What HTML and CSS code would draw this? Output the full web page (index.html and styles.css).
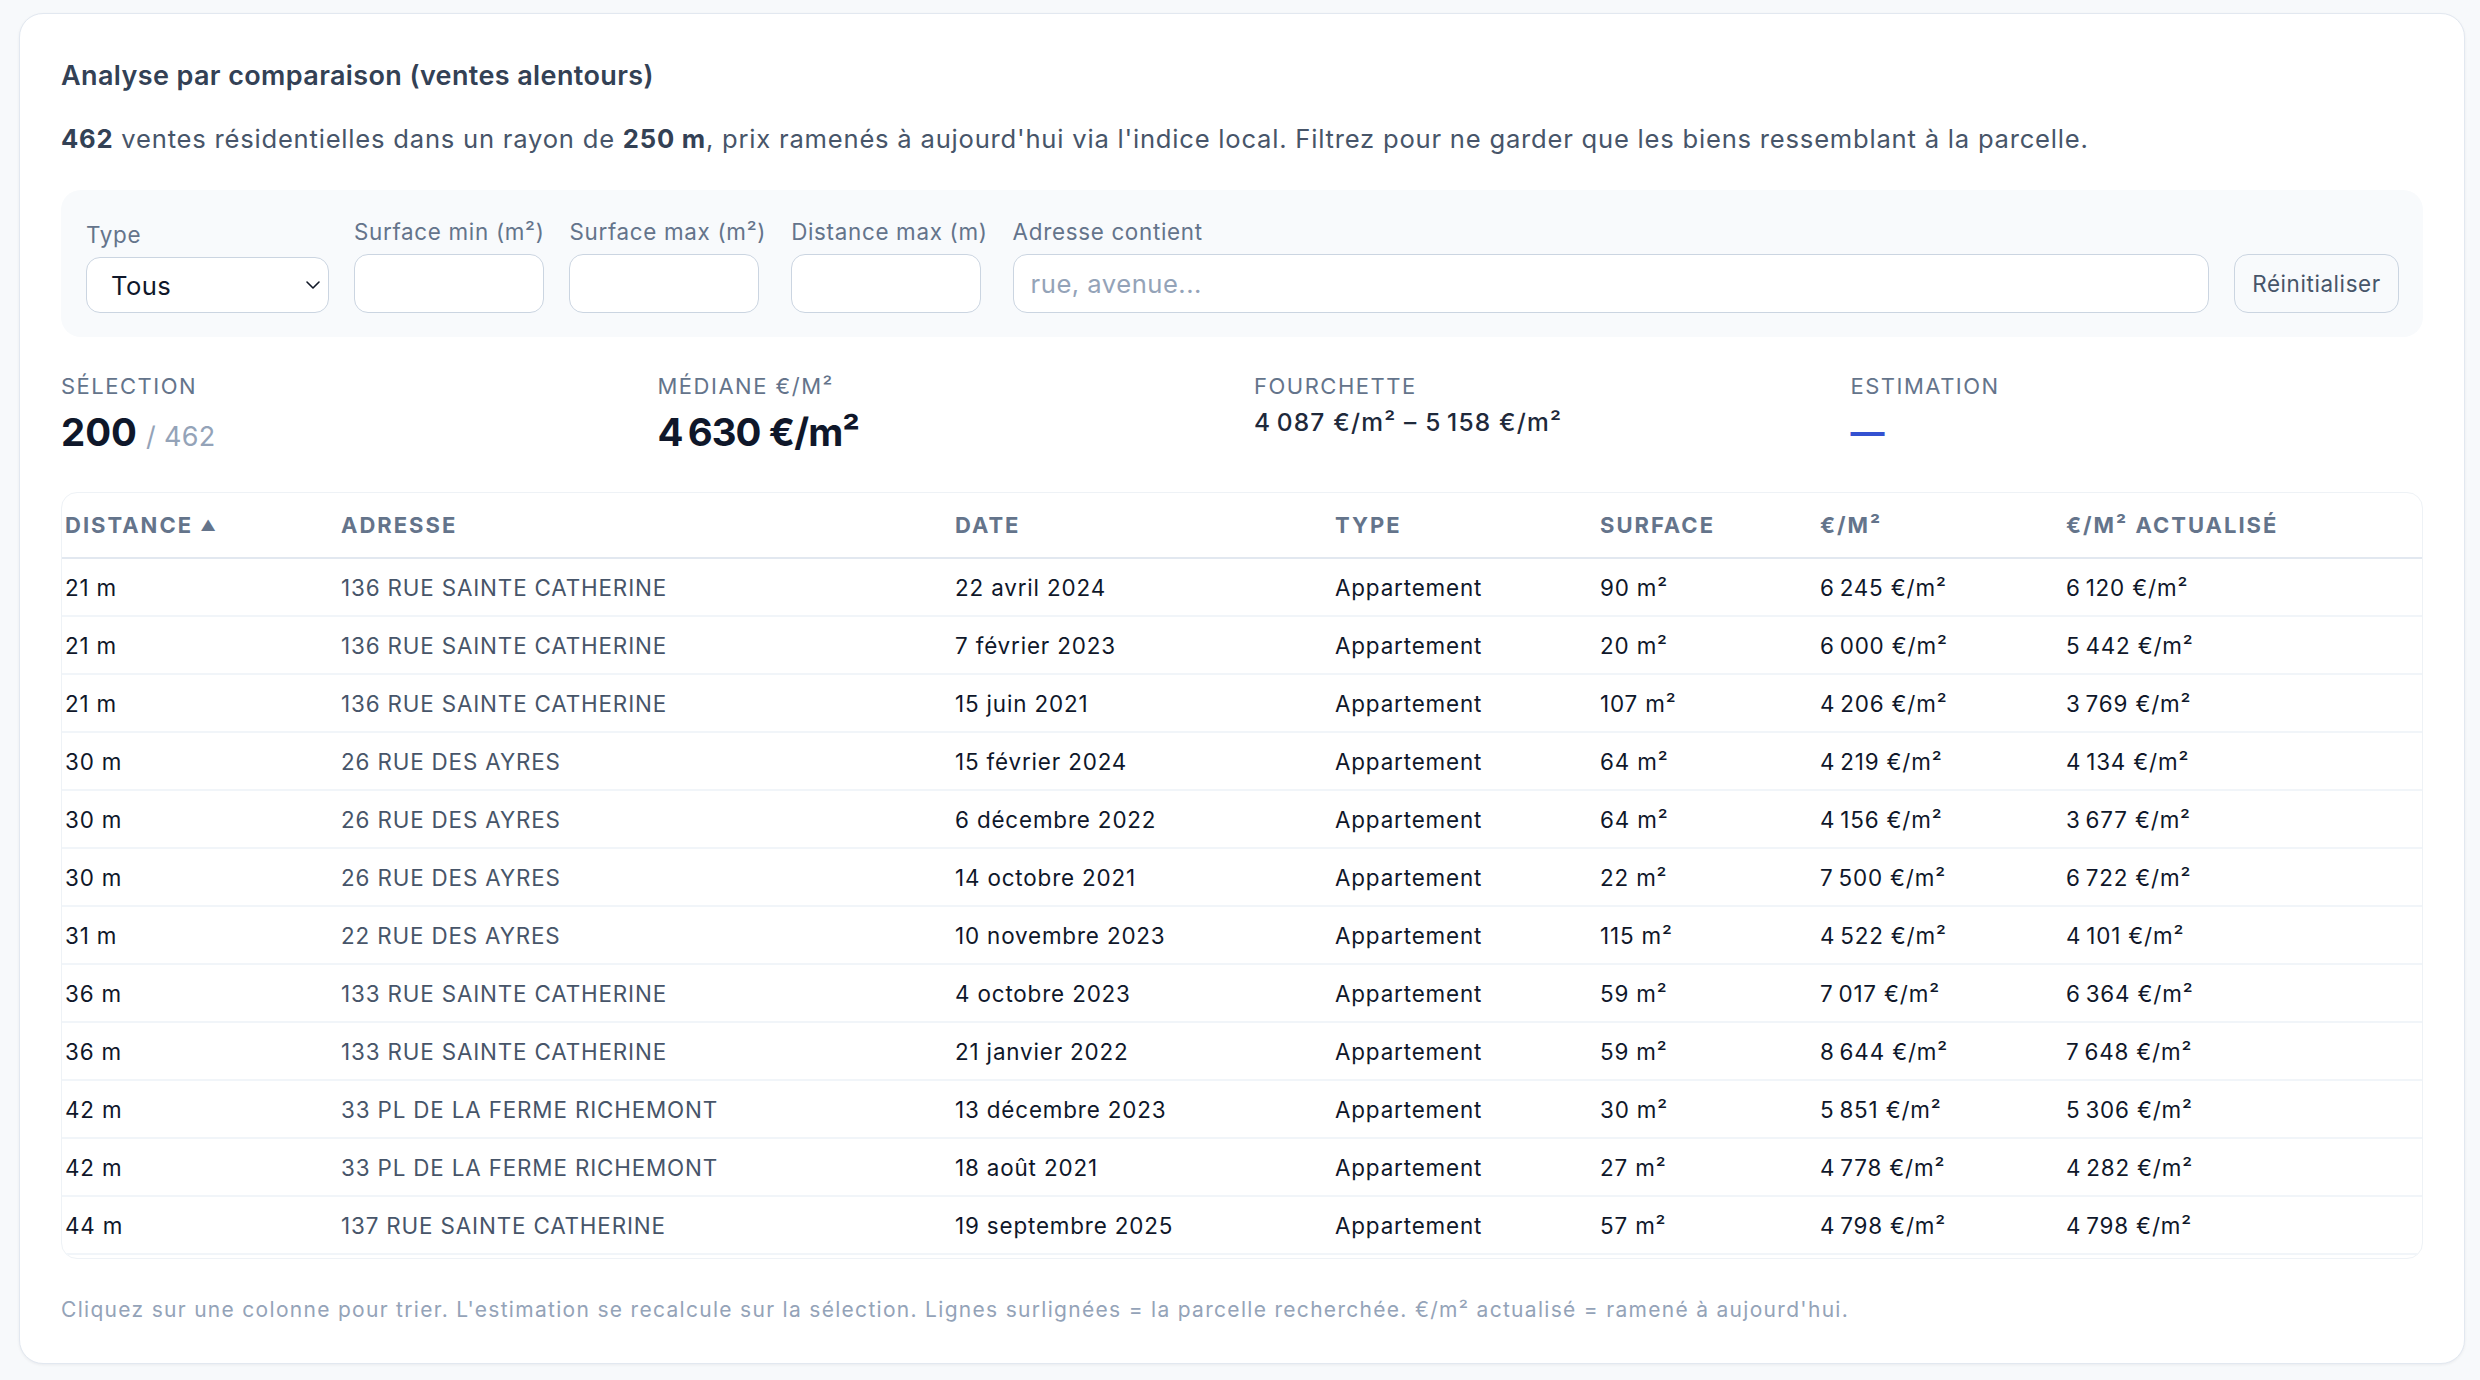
FILE: index.html
```html
<!DOCTYPE html>
<html lang="fr">
<head>
<meta charset="utf-8">
<title>Analyse par comparaison</title>
<link rel="stylesheet" href="styles.css">
</head>
<body>
<section class="card">
  <h2 class="title">Analyse par comparaison (ventes alentours)</h2>
  <p class="desc"><b>462</b> ventes résidentielles dans un rayon de <b>250&nbsp;m</b>, prix ramenés à aujourd'hui via l'indice local. Filtrez pour ne garder que les biens ressemblant à la parcelle.</p>

  <div class="filters">
    <label class="field">
      <span class="flabel">Type</span>
      <span class="select-wrap">
        <select class="select"><option>Tous</option></select>
        <svg class="chev" width="16" height="10" viewBox="0 0 16 10"><path d="M2 2l6 6 6-6" fill="none" stroke="#111827" stroke-width="1.6" stroke-linecap="round" stroke-linejoin="round"/></svg>
      </span>
    </label>
    <label class="field">
      <span class="flabel">Surface min (m²)</span>
      <input class="input small" type="text">
    </label>
    <label class="field">
      <span class="flabel">Surface max (m²)</span>
      <input class="input small" type="text">
    </label>
    <label class="field">
      <span class="flabel">Distance max (m)</span>
      <input class="input small" type="text">
    </label>
    <label class="field grow">
      <span class="flabel">Adresse contient</span>
      <input class="input" type="text" placeholder="rue, avenue...">
    </label>
    <button class="btn" type="button">Réinitialiser</button>
  </div>

  <div class="stats">
    <div class="stat">
      <div class="slabel">Sélection</div>
      <div class="sval big">200 <span class="of">/ 462</span></div>
    </div>
    <div class="stat">
      <div class="slabel">Médiane €/m²</div>
      <div class="sval big tight">4&#8239;630 €/m²</div>
    </div>
    <div class="stat">
      <div class="slabel">Fourchette</div>
      <div class="sval range">4&#8239;087 €/m² – 5&#8239;158 €/m²</div>
    </div>
    <div class="stat">
      <div class="slabel">Estimation</div>
      <div class="sval dash">—</div>
    </div>
  </div>

  <div class="table-wrap">
    <table class="tbl">
      <colgroup>
        <col class="c-dist"><col class="c-addr"><col class="c-date"><col class="c-type"><col class="c-surf"><col class="c-pm"><col class="c-act">
      </colgroup>
      <thead>
        <tr><th>Distance <span class="arrow">▲</span></th><th>Adresse</th><th>Date</th><th>Type</th><th>Surface</th><th>€/m²</th><th>€/m² actualisé</th></tr>
      </thead>
      <tbody>
        <tr><td>21 m</td><td class="addr">136 RUE SAINTE CATHERINE</td><td>22 avril 2024</td><td>Appartement</td><td>90 m²</td><td>6&#8239;245 €/m²</td><td>6&#8239;120 €/m²</td></tr>
        <tr><td>21 m</td><td class="addr">136 RUE SAINTE CATHERINE</td><td>7 février 2023</td><td>Appartement</td><td>20 m²</td><td>6&#8239;000 €/m²</td><td>5&#8239;442 €/m²</td></tr>
        <tr><td>21 m</td><td class="addr">136 RUE SAINTE CATHERINE</td><td>15 juin 2021</td><td>Appartement</td><td>107 m²</td><td>4&#8239;206 €/m²</td><td>3&#8239;769 €/m²</td></tr>
        <tr><td>30 m</td><td class="addr">26 RUE DES AYRES</td><td>15 février 2024</td><td>Appartement</td><td>64 m²</td><td>4&#8239;219 €/m²</td><td>4&#8239;134 €/m²</td></tr>
        <tr><td>30 m</td><td class="addr">26 RUE DES AYRES</td><td>6 décembre 2022</td><td>Appartement</td><td>64 m²</td><td>4&#8239;156 €/m²</td><td>3&#8239;677 €/m²</td></tr>
        <tr><td>30 m</td><td class="addr">26 RUE DES AYRES</td><td>14 octobre 2021</td><td>Appartement</td><td>22 m²</td><td>7&#8239;500 €/m²</td><td>6&#8239;722 €/m²</td></tr>
        <tr><td>31 m</td><td class="addr">22 RUE DES AYRES</td><td>10 novembre 2023</td><td>Appartement</td><td>115 m²</td><td>4&#8239;522 €/m²</td><td>4&#8239;101 €/m²</td></tr>
        <tr><td>36 m</td><td class="addr">133 RUE SAINTE CATHERINE</td><td>4 octobre 2023</td><td>Appartement</td><td>59 m²</td><td>7&#8239;017 €/m²</td><td>6&#8239;364 €/m²</td></tr>
        <tr><td>36 m</td><td class="addr">133 RUE SAINTE CATHERINE</td><td>21 janvier 2022</td><td>Appartement</td><td>59 m²</td><td>8&#8239;644 €/m²</td><td>7&#8239;648 €/m²</td></tr>
        <tr><td>42 m</td><td class="addr">33 PL DE LA FERME RICHEMONT</td><td>13 décembre 2023</td><td>Appartement</td><td>30 m²</td><td>5&#8239;851 €/m²</td><td>5&#8239;306 €/m²</td></tr>
        <tr><td>42 m</td><td class="addr">33 PL DE LA FERME RICHEMONT</td><td>18 août 2021</td><td>Appartement</td><td>27 m²</td><td>4&#8239;778 €/m²</td><td>4&#8239;282 €/m²</td></tr>
        <tr><td>44 m</td><td class="addr">137 RUE SAINTE CATHERINE</td><td>19 septembre 2025</td><td>Appartement</td><td>57 m²</td><td>4&#8239;798 €/m²</td><td>4&#8239;798 €/m²</td></tr>
      </tbody>
    </table>
  </div>

  <p class="foot">Cliquez sur une colonne pour trier. L'estimation se recalcule sur la sélection. Lignes surlignées = la parcelle recherchée. €/m² actualisé = ramené à aujourd'hui.</p>
</section>
</body>
</html>
```

FILE: styles.css
```css
* { box-sizing: border-box; }

html, body {
  margin: 0;
  background: #f7f9fb;
}

body {
  padding: 13px 15px 18px 19px;
  font-family: Inter, "Noto Sans", "Liberation Sans", sans-serif;
  color: #0f172a;
}

.card {
  background: #ffffff;
  border: 1px solid #e2e8f0;
  border-radius: 24px;
  padding: 44px 41px 38px 41px;
  box-shadow: 0 1px 3px rgba(15, 23, 42, 0.06);
}

.title {
  margin: 0;
  font-size: 27px;
  line-height: 35px;
  font-weight: 600;
  letter-spacing: 0.38px;
  color: #334155;
}

.desc {
  margin: 27px 0 0 0;
  font-size: 25.6px;
  line-height: 38px;
  letter-spacing: 0.78px;
  color: #475569;
}

.desc b {
  font-weight: 700;
  color: #334155;
}

.filters {
  margin-top: 32px;
  background: #f8fafc;
  border-radius: 20px;
  padding: 27px 24px 24px 25px;
  display: flex;
  align-items: flex-end;
  gap: 25px;
}

.field {
  display: flex;
  flex-direction: column;
  gap: 7px;
}

.field.grow { flex: 1; }

.flabel {
  font-size: 22.4px;
  line-height: 30px;
  letter-spacing: 0.69px;
  color: #64748b;
  white-space: nowrap;
}

.select-wrap {
  position: relative;
  display: block;
  width: 243px;
  height: 56px;
}

.select {
  appearance: none;
  -webkit-appearance: none;
  width: 100%;
  height: 100%;
  border: 1.5px solid #cbd5e1;
  border-radius: 14px;
  background: #ffffff;
  padding: 0 24px;
  font-family: inherit;
  font-size: 25.6px;
  letter-spacing: 0.4px;
  color: #0f172a;
}

.chev {
  position: absolute;
  right: 8px;
  top: 23px;
  pointer-events: none;
}

.input {
  height: 59px;
  border: 1.5px solid #cbd5e1;
  border-radius: 14px;
  background: #ffffff;
  padding: 0 17px;
  font-family: inherit;
  font-size: 25.6px;
  letter-spacing: 0.5px;
  color: #0f172a;
  width: 100%;
}

.input.small { width: 190px; }

.input::placeholder { color: #94a3b8; }

.btn {
  height: 59px;
  width: 165px;
  border: 1.5px solid #cbd5e1;
  border-radius: 14px;
  background: #f8fafc;
  font-family: inherit;
  font-size: 22.4px;
  letter-spacing: 0.6px;
  color: #475569;
  padding: 0;
}

.stats {
  margin-top: 34px;
  display: grid;
  grid-template-columns: repeat(4, 1fr);
  gap: 24px;
}

.slabel {
  font-size: 22px;
  line-height: 30px;
  text-transform: uppercase;
  letter-spacing: 1.5px;
  color: #64748b;
}

.sval {
  margin-top: 8px;
}

.sval.big {
  font-size: 38.4px;
  line-height: 46px;
  font-weight: 700;
  color: #0f172a;
}

.sval.big.tight { letter-spacing: -0.9px; }

.sval .of {
  font-size: 27px;
  font-weight: 400;
  letter-spacing: 0.3px;
  color: #94a3b8;
}

.sval.range {
  font-size: 24.5px;
  line-height: 31px;
  font-weight: 500;
  letter-spacing: 1.2px;
  color: #1e293b;
  margin-top: 6px;
}

.sval.dash {
  font-size: 34px;
  line-height: 46px;
  font-weight: 700;
  color: #3451d1;
}

.table-wrap {
  margin-top: 32px;
  border: 1px solid #eef2f6;
  border-radius: 16px;
  overflow: hidden;
  padding-bottom: 3px;
}

.tbl {
  width: 100%;
  border-collapse: collapse;
  table-layout: fixed;
}

.c-dist { width: 276px; }
.c-addr { width: 614px; }
.c-date { width: 380px; }
.c-type { width: 265px; }
.c-surf { width: 220px; }
.c-pm { width: 246px; }

.tbl th {
  height: 65px;
  text-align: left;
  padding: 0 3px;
  font-size: 22px;
  font-weight: 700;
  text-transform: uppercase;
  letter-spacing: 2px;
  color: #64748b;
  border-bottom: 2px solid #e2e8f0;
  white-space: nowrap;
}

.arrow {
  font-size: 15px;
  letter-spacing: 0;
  vertical-align: 2px;
}

.tbl td {
  height: 58px;
  padding: 0 3px;
  font-size: 22.4px;
  letter-spacing: 0.85px;
  color: #0f172a;
  border-bottom: 2px solid #f1f5f9;
  white-space: nowrap;
}

.tbl td.addr { color: #475569; }

.foot {
  margin: 35px 0 0 0;
  font-size: 21px;
  line-height: 31px;
  letter-spacing: 1.3px;
  color: #94a3b8;
}
```
